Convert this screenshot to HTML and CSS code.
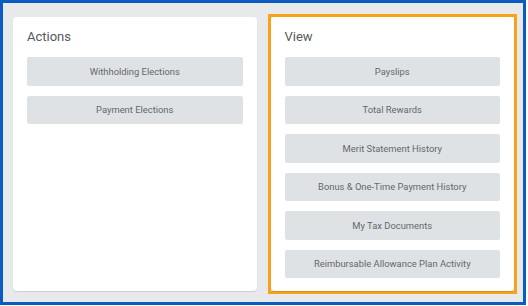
FILE: index.html
```html
<!DOCTYPE html>
<html lang="en">
<head>
  <meta charset="UTF-8" />
  <title>Pay</title>
  <link rel="stylesheet" href="styles.css">
</head>
<body>
  <div class="frame">
    <div class="panel">
      <section class="card">
        <h2>Actions</h2>
        <button>Withholding Elections</button>
        <button>Payment Elections</button>
      </section>
    </div>
    <div class="panel highlight">
      <section class="card">
        <h2>View</h2>
        <button>Payslips</button>
        <button>Total Rewards</button>
        <button>Merit Statement History</button>
        <button>Bonus &amp; One-Time Payment History</button>
        <button>My Tax Documents</button>
        <button>Reimbursable Allowance Plan Activity</button>
      </section>
    </div>
  </div>
</body>
</html>
```

FILE: styles.css
```css
body {
  margin: 0;
  background: #fff;
  font-family: Roboto, 'Liberation Sans', sans-serif;
}
.frame {
  box-sizing: border-box;
  width: 526px;
  height: 305px;
  border: 3px solid #0b5cc0;
  background: #e8e9eb;
  padding: 11px 6px 8px 7px;
  display: grid;
  grid-template-columns: 1fr 1fr;
  gap: 8px;
}
.panel {
  border: 3px solid transparent;
  display: flex;
}
.panel.highlight {
  border-color: #f7a21b;
}
.card {
  flex: 1;
  background: #fff;
  border-radius: 4px;
  box-shadow: 0 1px 1px rgba(0, 0, 0, 0.12);
  padding: 12px 14px 0;
  display: flex;
  flex-direction: column;
}
h2 {
  margin: 0 0 12px;
  font-size: 13px;
  line-height: 16px;
  font-weight: 400;
  color: #55585c;
}
button {
  height: 28.5px;
  margin-bottom: 10px;
  border: none;
  border-radius: 2px;
  background: #dfe2e5;
  color: #63676c;
  font-family: Roboto, 'Liberation Sans', sans-serif;
  font-size: 9.4px;
  padding: 0;
}
```
